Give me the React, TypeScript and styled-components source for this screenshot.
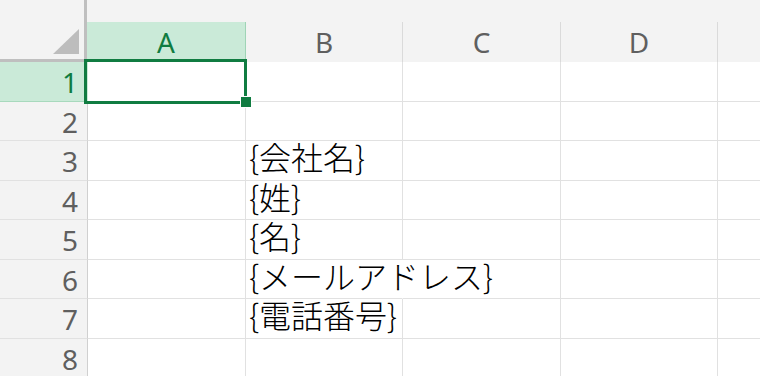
import * as React from 'react';
import styled, { createGlobalStyle } from 'styled-components';

const GlobalStyle = createGlobalStyle`
  html, body {
    margin: 0;
    padding: 0;
    background: #ffffff;
    overflow: hidden;
  }
`;

const HEADER_FONT = `"Noto Sans", "Open Sans", "Liberation Sans", sans-serif`;
const CELL_FONT = `"Noto Sans CJK JP", "Noto Sans", sans-serif`;

const GRID = '#e1e1e1';
const HEADER_BG = '#f3f3f3';
const ACTIVE_BG = '#caead8';
const ACTIVE_TEXT = '#107c41';

type Column = { id: string; width: number; headerWidth: number };

const columns: Column[] = [
  { id: 'A', width: 158, headerWidth: 159 },
  { id: 'B', width: 157, headerWidth: 157 },
  { id: 'C', width: 158, headerWidth: 158 },
  { id: 'D', width: 157, headerWidth: 157 },
  { id: '', width: 130, headerWidth: 130 },
];

const rowHeights = [40, 39, 40, 39, 40, 39, 40, 39];

// cell contents, key = column + row
const cells: Record<string, { text: string; spill?: boolean }> = {
  B3: { text: '{会社名}' },
  B4: { text: '{姓}' },
  B5: { text: '{名}' },
  B6: { text: '{メールアドレス}', spill: true },
  B7: { text: '{電話番号}' },
};

export default function App() {
  return (
    <>
      <GlobalStyle />
      <Sheet>
        <HeaderBar>
          <Corner>
            <svg width="26" height="25" viewBox="0 0 26 25">
              <polygon points="26,0 26,25 0,25" fill="#bdbdbd" />
            </svg>
          </Corner>
          {columns.map((col, i) => (
            <ColHeader key={i} $width={col.headerWidth} $active={col.id === 'A'}>
              {col.id}
            </ColHeader>
          ))}
        </HeaderBar>
        {rowHeights.map((h, r) => {
          const rowNum = r + 1;
          return (
            <Row key={rowNum} $height={h}>
              <RowHeader $active={rowNum === 1}>{rowNum}</RowHeader>
              {columns.map((col, c) => {
                const cell = cells[col.id + rowNum];
                const selected = col.id === 'A' && rowNum === 1;
                return (
                  <Cell key={c} $width={col.width} $spill={!!cell?.spill}>
                    {cell && <CellText>{cell.text}</CellText>}
                    {selected && (
                      <Selection>
                        <FillHandle />
                      </Selection>
                    )}
                  </Cell>
                );
              })}
            </Row>
          );
        })}
      </Sheet>
    </>
  );
}

const Sheet = styled.div`
  width: 760px;
  height: 376px;
  overflow: hidden;
  background: #ffffff;
`;

const HeaderBar = styled.div`
  display: flex;
  height: 62px;
  background: ${HEADER_BG};
`;

const Corner = styled.div`
  flex: none;
  width: 87px;
  height: 62px;
  box-sizing: border-box;
  border-right: 3px solid #bfbfbf;
  border-bottom: 3px solid #bfbfbf;
  display: flex;
  align-items: flex-end;
  justify-content: flex-end;
  padding: 0 5px 5px 0;

  svg {
    display: block;
  }
`;

const ColHeader = styled.div<{ $width: number; $active?: boolean }>`
  flex: none;
  width: ${(p) => p.$width}px;
  height: 40px;
  margin-top: 22px;
  box-sizing: border-box;
  border-right: 1px solid ${(p) => (p.$active ? '#9fd4b6' : '#dadada')};
  background: ${(p) => (p.$active ? ACTIVE_BG : 'transparent')};
  color: ${(p) => (p.$active ? ACTIVE_TEXT : '#5f5f5f')};
  font-family: ${HEADER_FONT};
  font-size: 28px;
  line-height: 40px;
  text-align: center;
`;

const Row = styled.div<{ $height: number }>`
  display: flex;
  height: ${(p) => p.$height}px;
`;

const RowHeader = styled.div<{ $active?: boolean }>`
  flex: none;
  width: 88px;
  box-sizing: border-box;
  padding: 3px 9px 0 0;
  border-right: 1px solid ${(p) => (p.$active ? ACTIVE_BG : '#d0d0d0')};
  border-bottom: 1px solid ${(p) => (p.$active ? '#a8d9bd' : GRID)};
  background: ${(p) => (p.$active ? ACTIVE_BG : HEADER_BG)};
  color: ${(p) => (p.$active ? ACTIVE_TEXT : '#5f5f5f')};
  font-family: ${HEADER_FONT};
  font-size: 28px;
  line-height: 34px;
  text-align: right;
  overflow: hidden;
`;

const Cell = styled.div<{ $width: number; $spill?: boolean }>`
  flex: none;
  position: relative;
  width: ${(p) => p.$width}px;
  box-sizing: border-box;
  padding-left: 3px;
  border-right: 1px solid ${(p) => (p.$spill ? 'transparent' : GRID)};
  border-bottom: 1px solid ${GRID};
`;

const CellText = styled.span`
  display: block;
  margin-top: -4px;
  color: #000000;
  font-family: ${CELL_FONT};
  font-weight: 300;
  font-size: 32px;
  line-height: 38px;
  white-space: nowrap;
`;

const Selection = styled.div`
  position: absolute;
  left: -4px;
  top: -3px;
  width: 163px;
  height: 45px;
  box-sizing: border-box;
  border: 3px solid ${ACTIVE_TEXT};
  z-index: 2;
`;

const FillHandle = styled.div`
  position: absolute;
  left: 153px;
  top: 34px;
  width: 12px;
  height: 12px;
  box-sizing: border-box;
  background: ${ACTIVE_TEXT};
  border: 1px solid #ffffff;
`;
